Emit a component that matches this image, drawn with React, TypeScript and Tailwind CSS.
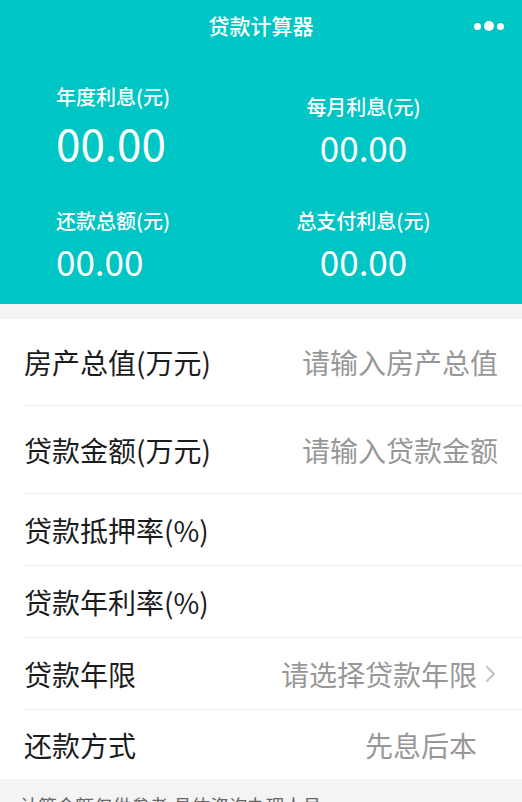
import React from "react";

const font = { fontFamily: '"Noto Sans CJK SC", "Noto Sans", sans-serif' };

function Row({
  label,
  value,
  muted = true,
  chevron = false,
  reserve = false,
  h,
  last = false,
}: {
  label: string;
  value?: string;
  muted?: boolean;
  chevron?: boolean;
  reserve?: boolean;
  h: string;
  last?: boolean;
}) {
  return (
    <div
      className={`ml-[24px] pr-[24px] flex items-center justify-between box-border ${h} ${
        last ? "" : "border-b border-[#ededed]"
      }`}
    >
      <span className="text-[28px] leading-[36px] text-[#1c1c1c]">{label}</span>
      {value !== undefined && (
        <div className="flex items-center">
          <span className={`text-[28px] leading-[36px] ${muted ? "text-[#979797]" : "text-[#1c1c1c]"}`}>
            {value}
          </span>
          {chevron ? (
            <svg width="21" height="18" viewBox="0 0 21 18" className="block">
              <path d="M10 2 L17 9 L10 16" fill="none" stroke="#c4c4c4" strokeWidth="2.2" strokeLinecap="round" strokeLinejoin="round" />
            </svg>
          ) : reserve ? (
            <span className="inline-block w-[21px]" />
          ) : null}
        </div>
      )}
    </div>
  );
}

export default function App() {
  return (
    <div style={font} className="w-[522px] min-h-[900px] bg-[#f4f4f4]">
      <div className="bg-[#00c5c5] text-white pb-[26px]">
        <div className="relative h-[50px] flex items-center justify-center">
          <span className="text-[21px] leading-[28px] font-medium">贷款计算器</span>
          <div className="absolute right-[18px] top-[21px] flex items-center gap-[3px]">
            <span className="block w-[7px] h-[7px] rounded-full bg-white" />
            <span className="block w-[10px] h-[10px] rounded-full bg-white" />
            <span className="block w-[7px] h-[7px] rounded-full bg-white" />
          </div>
        </div>
        <div className="px-[56px] pt-[35px] grid grid-cols-2 items-end">
          <div className="flex flex-col items-start">
            <span className="text-[20px] leading-[24px] font-medium">年度利息(元)</span>
            <span className="mt-[11px] text-[44px] leading-[44px]">00.00</span>
          </div>
          <div className="flex flex-col items-center">
            <span className="text-[20px] leading-[24px] font-medium">每月利息(元)</span>
            <span className="mt-[10px] text-[35px] leading-[35px]">00.00</span>
          </div>
        </div>
        <div className="px-[56px] mt-[45px] grid grid-cols-2 items-end">
          <div className="flex flex-col items-start">
            <span className="text-[20px] leading-[24px] font-medium">还款总额(元)</span>
            <span className="mt-[10px] text-[35px] leading-[35px]">00.00</span>
          </div>
          <div className="flex flex-col items-center">
            <span className="text-[20px] leading-[24px] font-medium">总支付利息(元)</span>
            <span className="mt-[10px] text-[35px] leading-[35px]">00.00</span>
          </div>
        </div>
      </div>
      <div className="h-[15px]" />
      <div className="bg-white">
        <Row label="房产总值(万元)" value="请输入房产总值" h="h-[87px]" />
        <Row label="贷款金额(万元)" value="请输入贷款金额" h="h-[88px]" />
        <Row label="贷款抵押率(%)" h="h-[72px]" />
        <Row label="贷款年利率(%)" h="h-[72px]" />
        <Row label="贷款年限" value="请选择贷款年限" chevron h="h-[72px]" />
        <Row label="还款方式" value="先息后本" reserve h="h-[69px]" last />
      </div>
      <div className="pl-[20px] pt-[12px]">
        <span className="text-[18.5px] leading-[28px] text-[#666666]">计算金额仅供参考,具体咨询办理人员</span>
      </div>
    </div>
  );
}
